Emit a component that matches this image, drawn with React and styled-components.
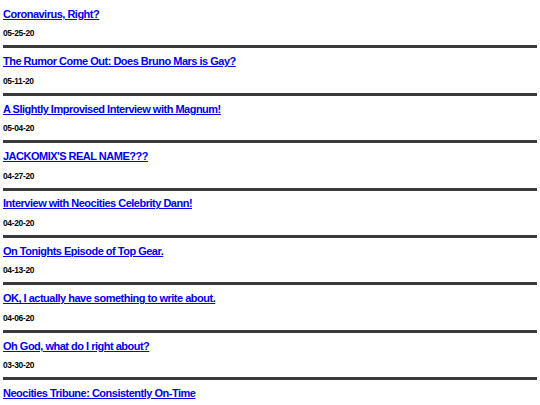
import React from "react";
import styled, { createGlobalStyle } from "styled-components";

const posts = [
  { title: "Coronavirus, Right?", date: "05-25-20" },
  { title: "The Rumor Come Out: Does Bruno Mars is Gay?", date: "05-11-20" },
  { title: "A Slightly Improvised Interview with Magnum!", date: "05-04-20" },
  { title: "JACKOMIX'S REAL NAME???", date: "04-27-20" },
  { title: "Interview with Neocities Celebrity Dann!", date: "04-20-20" },
  { title: "On Tonights Episode of Top Gear.", date: "04-13-20" },
  { title: "OK, I actually have something to write about.", date: "04-06-20" },
  { title: "Oh God, what do I right about?", date: "03-30-20" },
  { title: "Neocities Tribune: Consistently On-Time", date: "03-23-20" },
];

const GlobalStyle = createGlobalStyle`
  body {
    margin: 0;
    background: #ffffff;
    font-family: "Liberation Sans", Arial, sans-serif;
  }
`;

const App = () => {
  return (
    <>
      <GlobalStyle />
      <StList>
        {posts.map((post) => (
          <StEntry key={post.date}>
            <StTitle href="#">{post.title}</StTitle>
            <StDate>{post.date}</StDate>
            <StRule />
          </StEntry>
        ))}
      </StList>
    </>
  );
};

export default App;

const StList = styled.div`
  display: flex;
  flex-direction: column;
  padding: 1px 3px 0 3px;
`;

const StEntry = styled.div`
  display: flex;
  flex-direction: column;
  padding-top: 5.9px;
`;

const StTitle = styled.a`
  display: block;
  align-self: flex-start;
  font-size: 11px;
  letter-spacing: -0.5px;
  line-height: 14px;
  font-weight: 700;
  color: #0000ee;
  text-decoration: underline;
`;

const StDate = styled.div`
  margin-top: 7.5px;
  font-size: 8.4px;
  letter-spacing: -0.3px;
  line-height: 10px;
  font-weight: 700;
  color: #000000;
`;

const StRule = styled.div`
  margin-top: 7px;
  height: 3px;
  background: #3a3a3a;
`;
